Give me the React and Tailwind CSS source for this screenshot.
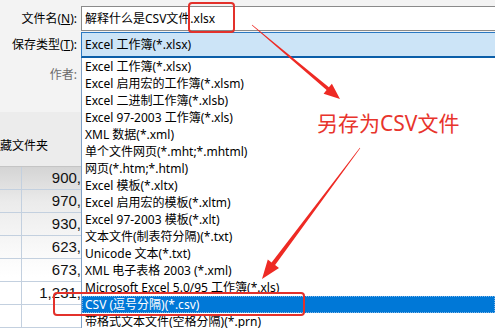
import React from "react";

const items = [
  "Excel 工作簿(*.xlsx)",
  "Excel 启用宏的工作簿(*.xlsm)",
  "Excel 二进制工作簿(*.xlsb)",
  "Excel 97-2003 工作簿(*.xls)",
  "XML 数据(*.xml)",
  "单个文件网页(*.mht;*.mhtml)",
  "网页(*.htm;*.html)",
  "Excel 模板(*.xltx)",
  "Excel 启用宏的模板(*.xltm)",
  "Excel 97-2003 模板(*.xlt)",
  "文本文件(制表符分隔)(*.txt)",
  "Unicode 文本(*.txt)",
  "XML 电子表格 2003 (*.xml)",
  "Microsoft Excel 5.0/95 工作簿(*.xls)",
  "CSV (逗号分隔)(*.csv)",
  "带格式文本文件(空格分隔)(*.prn)",
];

const numbers = ["900,", "970,", "930,", "623,", "673,", "1,231,", ""];

function arrowPoints(x1, y1, x2, y2, w0, w1, headLen, headW) {
  const dx = x2 - x1;
  const dy = y2 - y1;
  const len = Math.hypot(dx, dy);
  const ux = dx / len;
  const uy = dy / len;
  const nx = -uy;
  const ny = ux;
  const bx = x2 - ux * headLen;
  const by = y2 - uy * headLen;
  const pts = [
    [x1 + nx * w0, y1 + ny * w0],
    [bx + nx * w1, by + ny * w1],
    [bx + nx * headW, by + ny * headW],
    [x2, y2],
    [bx - nx * headW, by - ny * headW],
    [bx - nx * w1, by - ny * w1],
    [x1 - nx * w0, y1 - ny * w0],
  ];
  return pts.map((p) => p[0].toFixed(1) + "," + p[1].toFixed(1)).join(" ");
}

export default function App() {
  const ui = { fontFamily: '"Noto Sans", "Noto Sans CJK SC", sans-serif' };
  return (
    <div
      className="relative w-[495px] h-[328px] overflow-hidden bg-[#f3f3f3] text-[12px] text-black"
      style={ui}
    >
      <div className="grid grid-cols-[81px_1fr]">
        {/* Row 1 */}
        <div className="h-[31px] pt-[6px] flex justify-end items-center pr-[4px]">
          <span>
            文件名(<u>N</u>):
          </span>
        </div>
        <div className="pt-[6px]">
          <div className="h-[25px] bg-white border border-r-0 border-[#8a8a8a] pl-[3px] leading-[23px] whitespace-nowrap">
            解释什么是CSV文件.xlsx
          </div>
        </div>
        {/* Row 2 */}
        <div className="mt-[1px] h-[26px] flex justify-end items-center pr-[4px]">
          <span>
            保存类型(<u>T</u>):
          </span>
        </div>
        <div className="mt-[1px]">
          <div className="h-[26px] bg-[#cce4f7] border border-r-0 border-[#2a78c2] border-b-2 border-b-[#0b5ea8] pl-[3px] leading-[23px] whitespace-nowrap">
            Excel 工作簿(*.xlsx)
          </div>
        </div>
        {/* Row 3 */}
        <div className="h-[270px] flex flex-col overflow-hidden">
          <div className="h-[64px] pt-[8px] pr-[4px] text-right leading-[17px] text-[#6b6b6b]">
            作者:
          </div>
          <div className="h-[60px] bg-[#ececec] pt-[25px] leading-[17px] whitespace-nowrap">
            藏文件夹
          </div>
          <div className="flex-1 border-t border-[#c4c4c4] bg-[linear-gradient(to_bottom,#d4d4d4_0px,#ebebeb_35px,#f8f8f8_80px,#ffffff_110px)]">
            {numbers.map((n, i) => (
              <div
                key={i}
                className="h-[23px] grid grid-cols-[22px_1fr] border-b border-[#c3d0df]"
              >
                <div className="border-r border-[#c3d0df]" />
                <div
                  className="text-right text-[15px] leading-[22px] text-[#111111] whitespace-nowrap overflow-hidden"
                  style={{ fontFamily: '"Liberation Sans", Arial, sans-serif' }}
                >
                  {n}
                </div>
              </div>
            ))}
          </div>
        </div>
        <div className="h-[270px] bg-white border-l border-[#7d9fc6] overflow-hidden">
          {items.map((t, i) => (
            <div
              key={i}
              className={
                i === 14
                  ? "h-[17px] leading-[17px] pl-[3px] whitespace-nowrap bg-[#0078d7] text-white outline outline-1 outline-dotted outline-[#7fb6e8] -outline-offset-1"
                  : "h-[17px] leading-[17px] pl-[3px] whitespace-nowrap"
              }
            >
              {t}
            </div>
          ))}
        </div>
      </div>

      {/* Annotation overlays */}
      <div className="absolute left-[188px] top-[2px] w-[47px] h-[31px] border-2 border-[#e3312b] rounded-[4px]" />
      <div className="absolute left-[53px] top-[292px] w-[252px] h-[24px] border-2 border-[#e3312b] rounded-[4px]" />
      <div
        className="absolute left-[317px] top-[109px] text-[21px] leading-[28px] text-[#e8342c] whitespace-nowrap"
        style={{ fontFamily: '"Noto Sans", "Noto Sans CJK SC", sans-serif' }}
      >
        另存为CSV文件
      </div>
      <svg
        className="absolute left-0 top-0"
        width="495"
        height="328"
        viewBox="0 0 495 328"
      >
        <polygon
          points={arrowPoints(252, 25, 340, 99, 0.3, 1.8, 16, 6.5)}
          fill="#ee2a24"
        />
        <polygon
          points={arrowPoints(360, 148, 262, 279, 0.3, 2.2, 19, 7)}
          fill="#ee2a24"
        />
      </svg>
    </div>
  );
}
